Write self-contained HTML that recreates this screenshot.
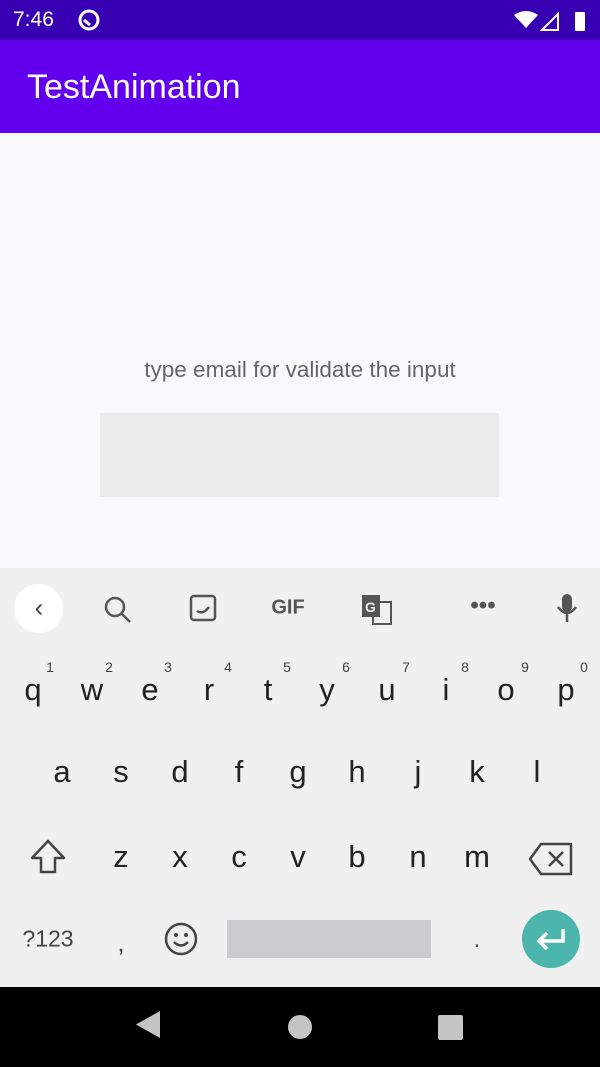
<!DOCTYPE html><html><head><style>
body{margin:0;width:600px;height:1067px;position:relative;overflow:hidden;background:#f9f8fb;font-family:"Liberation Sans",sans-serif}
.a{position:absolute}
.k{position:absolute;font-size:31px;color:#222;transform:translate(-50%,-50%)}
.n{position:absolute;font-size:14px;color:#444;transform:translate(-50%,-50%)}
</style></head><body>
<div class="a" style="left:0;top:0;width:600px;height:40px;background:#3700b3"></div>
<div class="a" style="left:13px;top:8px;color:#fff;font-size:21px">7:46</div>
<svg class="a" style="left:77px;top:8px" width="24" height="24"><circle cx="12" cy="12" r="9" fill="none" stroke="#fff" stroke-width="3"/><path d="M7 12l6 5" stroke="#fff" stroke-width="3"/></svg>
<svg class="a" style="left:512px;top:8px" width="80" height="26"><path d="M2 7q12-8 24 0l-12 13z" fill="#fff"/><path d="M30 22l16-16v16z" fill="none" stroke="#fff" stroke-width="2"/><rect x="63" y="4" width="10" height="19" rx="1" fill="#fff"/></svg>
<div class="a" style="left:0;top:40px;width:600px;height:93px;background:#6200ee"></div>
<div class="a" style="left:27px;top:68px;color:#fff;font-size:34px">TestAnimation</div>
<div class="a" style="left:0;top:370px;width:600px;text-align:center;font-size:22.5px;color:#666;line-height:1;transform:translateY(-50%)">type email for validate the input</div>
<div class="a" style="left:100px;top:413px;width:399px;height:84px;background:#ececec"></div>
<div class="a" style="left:0;top:568px;width:600px;height:419px;background:#f0f0f1"></div>
<div class="a" style="left:14px;top:584px;width:49px;height:49px;border-radius:50%;background:#fff"></div>
<div class="k" style="left:39px;top:608px;font-size:26px;color:#444">‹</div>
<svg class="a" style="left:102px;top:594px" width="32" height="32"><circle cx="13" cy="13" r="9" fill="none" stroke="#555" stroke-width="2.5"/><path d="M19 19l9 9" stroke="#555" stroke-width="2.5"/></svg>
<svg class="a" style="left:189px;top:594px" width="28" height="30"><rect x="2" y="2" width="24" height="24" rx="3" fill="none" stroke="#555" stroke-width="2.5"/><path d="M8 17q6 4 12-4" stroke="#555" stroke-width="2.5" fill="none"/></svg>
<div class="k" style="left:288px;top:608px;font-size:20px;font-weight:bold;color:#555">GIF</div>
<svg class="a" style="left:361px;top:594px" width="32" height="32"><rect x="1" y="1" width="18" height="22" fill="#555"/><rect x="12" y="8" width="18" height="22" fill="none" stroke="#555" stroke-width="2"/><text x="4" y="18" font-size="14" font-weight="bold" fill="#eee" font-family="Liberation Sans">G</text></svg>
<div class="k" style="left:483px;top:606px;font-size:24px;color:#555;font-weight:bold">•••</div>
<svg class="a" style="left:555px;top:592px" width="24" height="32"><rect x="7" y="2" width="10" height="18" rx="5" fill="#555"/><path d="M3 15q9 12 18 0M12 22v8" stroke="#555" stroke-width="2.5" fill="none"/></svg>
<div class="k" style="left:33px;top:690px">q</div><div class="k" style="left:92px;top:690px">w</div><div class="k" style="left:150px;top:690px">e</div><div class="k" style="left:209px;top:690px">r</div><div class="k" style="left:268px;top:690px">t</div><div class="k" style="left:327px;top:690px">y</div><div class="k" style="left:387px;top:690px">u</div><div class="k" style="left:446px;top:690px">i</div><div class="k" style="left:506px;top:690px">o</div><div class="k" style="left:566px;top:690px">p</div>
<div class="n" style="left:50px;top:667px">1</div><div class="n" style="left:109px;top:667px">2</div><div class="n" style="left:168px;top:667px">3</div><div class="n" style="left:228px;top:667px">4</div><div class="n" style="left:287px;top:667px">5</div><div class="n" style="left:346px;top:667px">6</div><div class="n" style="left:406px;top:667px">7</div><div class="n" style="left:465px;top:667px">8</div><div class="n" style="left:525px;top:667px">9</div><div class="n" style="left:584px;top:667px">0</div>
<div class="k" style="left:62px;top:772px">a</div><div class="k" style="left:121px;top:772px">s</div><div class="k" style="left:180px;top:772px">d</div><div class="k" style="left:239px;top:772px">f</div><div class="k" style="left:298px;top:772px">g</div><div class="k" style="left:357px;top:772px">h</div><div class="k" style="left:418px;top:772px">j</div><div class="k" style="left:477px;top:772px">k</div><div class="k" style="left:537px;top:772px">l</div>
<svg class="a" style="left:28px;top:838px" width="40" height="38"><path d="M20 3L4 20h9v14h14V20h9z" fill="none" stroke="#444" stroke-width="2.5" stroke-linejoin="round"/></svg>
<div class="k" style="left:121px;top:857px">z</div><div class="k" style="left:180px;top:857px">x</div><div class="k" style="left:239px;top:857px">c</div><div class="k" style="left:298px;top:857px">v</div><div class="k" style="left:357px;top:857px">b</div><div class="k" style="left:418px;top:857px">n</div><div class="k" style="left:477px;top:857px">m</div>
<svg class="a" style="left:528px;top:842px" width="46" height="34"><path d="M13 2h30v30H13L2 17z" fill="none" stroke="#444" stroke-width="2.5" stroke-linejoin="round"/><path d="M21 10l14 14M35 10L21 24" stroke="#444" stroke-width="2.5"/></svg>
<div class="k" style="left:48px;top:939px;font-size:23px;color:#444">?123</div>
<div class="k" style="left:121px;top:943px;font-size:26px;color:#444">,</div>
<svg class="a" style="left:163px;top:921px" width="36" height="36"><circle cx="18" cy="18" r="15" fill="none" stroke="#444" stroke-width="2.5"/><circle cx="13" cy="14" r="2" fill="#444"/><circle cx="23" cy="14" r="2" fill="#444"/><path d="M11 21q7 7 14 0" stroke="#444" stroke-width="2.5" fill="none"/></svg>
<div class="a" style="left:227px;top:920px;width:204px;height:38px;background:#cbcbcd"></div>
<div class="k" style="left:477px;top:940px;font-size:24px;color:#444">.</div>
<div class="a" style="left:522px;top:910px;width:58px;height:58px;border-radius:50%;background:#4db6ac"></div>
<svg class="a" style="left:532px;top:924px" width="38" height="30"><path d="M31 5v12H7M15 9l-8 8 8 8" stroke="#fff" stroke-width="3.5" fill="none"/></svg>
<div class="a" style="left:0;top:987px;width:600px;height:80px;background:#000"></div>
<svg class="a" style="left:0;top:987px" width="600" height="80"><path d="M160 24v27l-24-13.5z" fill="#c4c4c4"/><circle cx="300" cy="40" r="12" fill="#c4c4c4"/><rect x="438" y="28" width="25" height="25" rx="2" fill="#c4c4c4"/></svg>
</body></html>
